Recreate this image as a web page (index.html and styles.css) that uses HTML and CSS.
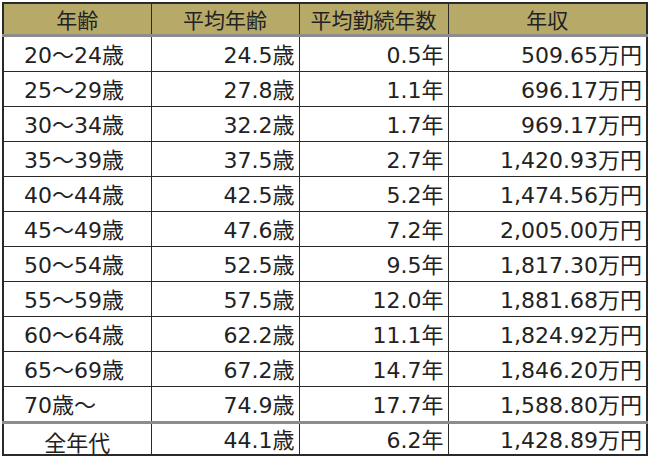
FILE: index.html
```html
<!DOCTYPE html>
<html lang="ja">
<head>
<meta charset="utf-8">
<link rel="stylesheet" href="styles.css">
</head>
<body>
<table class="tbl">
  <colgroup>
    <col class="c1"><col class="c2"><col class="c3"><col class="c4">
  </colgroup>
  <thead>
    <tr class="head"><th>年齢</th><th>平均年齢</th><th>平均勤続年数</th><th>年収</th></tr>
  </thead>
  <tbody>
    <tr><td class="age">20～24歳</td><td>24.5歳</td><td>0.5年</td><td>509.65万円</td></tr>
    <tr><td class="age">25～29歳</td><td>27.8歳</td><td>1.1年</td><td>696.17万円</td></tr>
    <tr><td class="age">30～34歳</td><td>32.2歳</td><td>1.7年</td><td>969.17万円</td></tr>
    <tr><td class="age">35～39歳</td><td>37.5歳</td><td>2.7年</td><td>1,420.93万円</td></tr>
    <tr><td class="age">40～44歳</td><td>42.5歳</td><td>5.2年</td><td>1,474.56万円</td></tr>
    <tr><td class="age">45～49歳</td><td>47.6歳</td><td>7.2年</td><td>2,005.00万円</td></tr>
    <tr><td class="age">50～54歳</td><td>52.5歳</td><td>9.5年</td><td>1,817.30万円</td></tr>
    <tr><td class="age">55～59歳</td><td>57.5歳</td><td>12.0年</td><td>1,881.68万円</td></tr>
    <tr><td class="age">60～64歳</td><td>62.2歳</td><td>11.1年</td><td>1,824.92万円</td></tr>
    <tr><td class="age">65～69歳</td><td>67.2歳</td><td>14.7年</td><td>1,846.20万円</td></tr>
    <tr><td class="age">70歳～</td><td>74.9歳</td><td>17.7年</td><td>1,588.80万円</td></tr>
    <tr class="total"><td class="all">全年代</td><td>44.1歳</td><td>6.2年</td><td>1,428.89万円</td></tr>
  </tbody>
</table>
</body>
</html>
```

FILE: styles.css
```css
html, body {
  margin: 0;
  padding: 0;
  background: #ffffff;
}
body {
  padding: 2px 0 0 2px;
  font-family: "DejaVu Sans", "Noto Sans CJK JP", sans-serif;
  color: #222;
}
.tbl {
  border-collapse: collapse;
  table-layout: fixed;
  width: 644px;
  border: 2px solid #2a2a2a;
}
.c1 { width: 148px; }
.c2 { width: 148px; }
.c3 { width: 149px; }
.c4 { width: 199px; }
.tbl th, .tbl td {
  border-left: 1px solid #2a2a2a;
  border-right: 1px solid #2a2a2a;
  padding: 0 4px 0 0;
  font-size: 22px;
  line-height: 22px;
  white-space: nowrap;
}
.head th {
  background: #b7aa69;
  font-family: "Noto Sans CJK JP", sans-serif;
  font-weight: normal;
  height: 30px;
  text-align: center;
  padding: 0;
  font-size: 21px;
  border-bottom: 3px solid #8c8c8c;
  border-left-color: #333;
}
.tbl td {
  height: 31px;
  padding-top: 3px;
  text-align: right;
  border-bottom: 1px solid #2a2a2a;
}
.tbl td.age {
  text-align: left;
  padding-left: 20px;
}
.tbl td.all {
  text-align: center;
  padding: 3px 0 0 0;
  font-family: "Noto Sans CJK JP", sans-serif;
}
.tbl tbody tr:nth-child(11) td {
  border-bottom: 3px solid #8c8c8c;
}
.total td {
  height: 27px;
}
```
